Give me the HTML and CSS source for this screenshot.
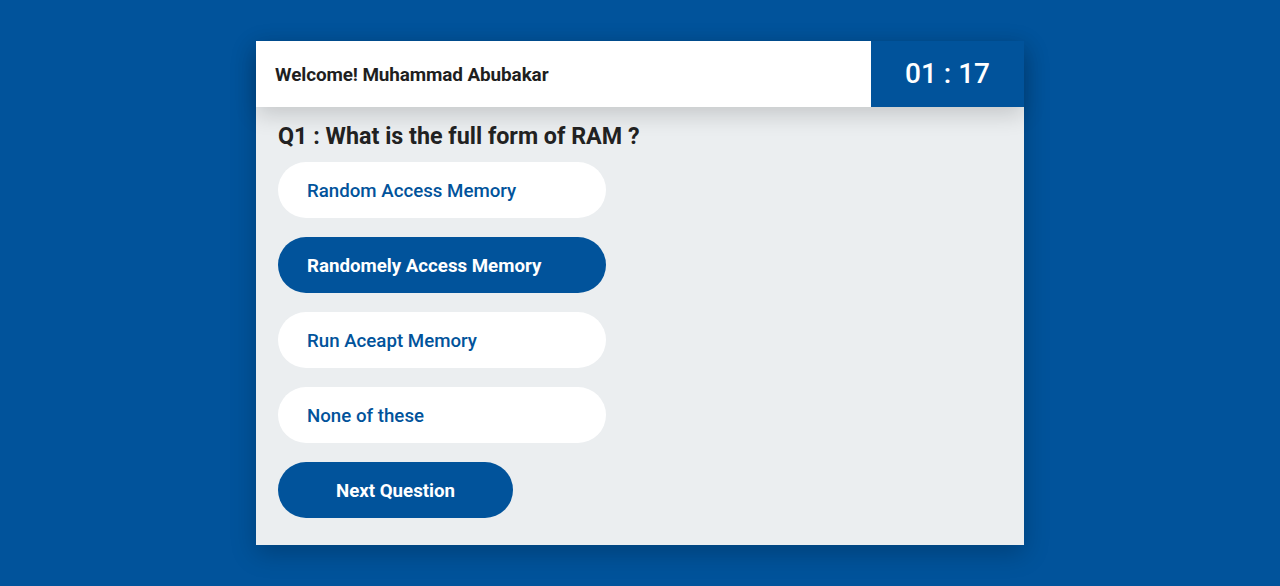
FILE: index.html
```html
<!DOCTYPE html>
<html>
<head>
<meta charset="utf-8">
<link rel="stylesheet" href="styles.css">
</head>
<body>
<div class="page">
  <div class="card">
    <div class="header">
      <div class="welcome">Welcome! Muhammad Abubakar</div>
      <div class="timer">01 : 17</div>
    </div>
    <div class="body">
      <h2 class="question">Q1 : What is the full form of RAM ?</h2>
      <div class="options">
        <button class="option">Random Access Memory</button>
        <button class="option selected">Randomely Access Memory</button>
        <button class="option">Run Aceapt Memory</button>
        <button class="option">None of these</button>
        <button class="next">Next Question</button>
      </div>
    </div>
  </div>
</div>
</body>
</html>
```

FILE: styles.css
```css
html, body {
  margin: 0;
  padding: 0;
}
body {
  background: #01539b;
  font-family: Roboto, "Liberation Sans", sans-serif;
  width: 1280px;
  height: 586px;
  overflow: hidden;
}
.page {
  display: flex;
  justify-content: center;
  padding-top: 41px;
}
.card {
  width: 768px;
  background: #ebeef0;
  box-shadow: 0 8px 24px rgba(0, 0, 0, 0.22);
}
.header {
  display: flex;
  height: 66px;
  box-shadow: 0 8px 22px rgba(0, 0, 0, 0.16);
  position: relative;
}
.welcome {
  flex: 1;
  background: #fff;
  display: flex;
  align-items: center;
  padding-left: 19px;
  font-size: 18.9px;
  font-weight: 700;
  color: #1f1f1f;
  letter-spacing: -0.1px;
}
.timer {
  width: 153px;
  background: #01539b;
  color: #fff;
  display: flex;
  align-items: center;
  justify-content: center;
  font-size: 28px;
  font-weight: 500;
  padding: 0 0 2px 0;
  box-sizing: border-box;
}
.body {
  padding: 16px 22px 27px;
}
.question {
  margin: 0 0 13px;
  font-size: 23.3px;
  line-height: 26px;
  font-weight: 700;
  color: #222;
}
.options {
  display: flex;
  flex-direction: column;
  align-items: flex-start;
  gap: 19px;
}
.option, .next {
  font-family: Roboto, "Liberation Sans", sans-serif;
  border: none;
  height: 56px;
  border-radius: 28px;
  font-size: 18.7px;
  cursor: pointer;
  padding-top: 2px;
}
.option {
  width: 328px;
  background: #fff;
  color: #01539b;
  font-weight: 500;
  text-align: left;
  padding-left: 29px;
  padding-right: 0;
}
.option.selected {
  background: #01539b;
  color: #fff;
  font-weight: 700;
}
.next {
  width: 235px;
  background: #01539b;
  color: #fff;
  font-weight: 700;
  padding-left: 0;
  padding-right: 0;
}
```
